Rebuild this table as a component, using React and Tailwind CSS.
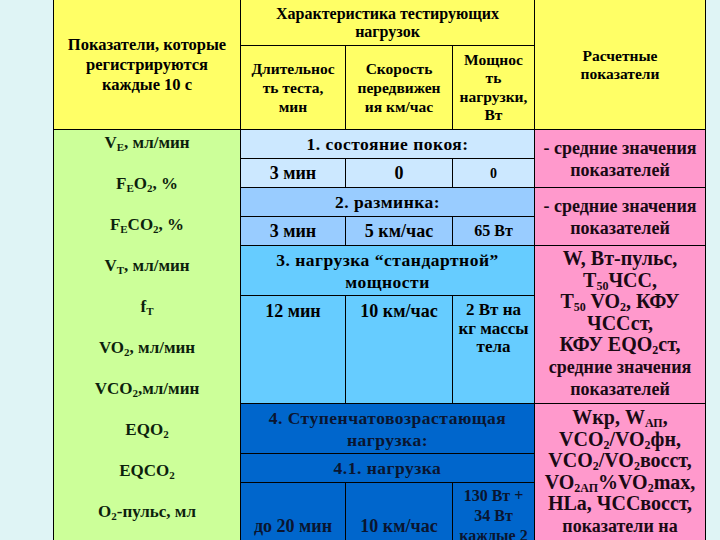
const indicators = [
  <>V<sub className="text-[11px]">E</sub>, мл/мин</>,
  <>F<sub className="text-[11px]">E</sub>O<sub className="text-[11px]">2</sub>, %</>,
  <>F<sub className="text-[11px]">E</sub>CO<sub className="text-[11px]">2</sub>, %</>,
  <>V<sub className="text-[11px]">T</sub>, мл/мин</>,
  <>f<sub className="text-[11px]">T</sub></>,
  <>VO<sub className="text-[11px]">2</sub>, мл/мин</>,
  <>VCO<sub className="text-[11px]">2</sub>,мл/мин</>,
  <>EQO<sub className="text-[11px]">2</sub></>,
  <>EQCO<sub className="text-[11px]">2</sub></>,
  <>O<sub className="text-[11px]">2</sub>-пульс, мл</>,
];

const Sub = ({ children }) => <sub className="text-[12px]">{children}</sub>;

export default function App() {
  return (
    <div className="min-h-[540px] bg-[#dff4f5] [font-family:Liberation_Serif,serif] font-bold text-black overflow-hidden">
      <div className="ml-[53px] w-[653px] bg-black px-px pb-px grid grid-cols-[186px_104px_106px_81px_170px] grid-rows-[45px_83px_28px_28px_28px_28px_49px_107px_49px_28px_auto] gap-px text-center whitespace-nowrap">
        {/* header */}
        <div className="col-start-1 row-start-1 row-span-2 bg-[#ffff66] flex items-center justify-center text-[16.5px] leading-[20px]">
          Показатели, которые<br />регистрируются<br />каждые 10 с
        </div>
        <div className="col-start-2 col-span-3 row-start-1 bg-[#ffff66] flex items-center justify-center text-[16px] leading-[18px]">
          Характеристика тестирующих<br />нагрузок
        </div>
        <div className="col-start-5 row-start-1 row-span-2 bg-[#ffff66] flex items-center justify-center text-[15.5px] leading-[18px]">
          Расчетные<br />показатели
        </div>
        <div className="col-start-2 row-start-2 bg-[#ffff66] flex items-center justify-center text-[15.5px] leading-[19px]">
          Длительнос<br />ть теста,<br />мин
        </div>
        <div className="col-start-3 row-start-2 bg-[#ffff66] flex items-center justify-center text-[15.5px] leading-[19px]">
          Скорость<br />передвижен<br />ия км/час
        </div>
        <div className="col-start-4 row-start-2 bg-[#ffff66] flex items-center justify-center text-[15.5px] leading-[18.5px]">
          Мощнос<br />ть<br />нагрузки,<br />Вт
        </div>

        {/* left indicators */}
        <div className="col-start-1 row-start-3 row-span-9 bg-[#ccff99] pt-[3px] text-[17px] leading-[20px] text-[#0d1f0d]">
          {indicators.map((item, i) => (
            <div key={i} className="h-[41px]">{item}</div>
          ))}
        </div>

        {/* 1. rest */}
        <div className="col-start-2 col-span-3 row-start-3 bg-[#cce8ff] flex items-center justify-center text-[17.5px] tracking-[0.5px]">
          1. состояние покоя:
        </div>
        <div className="col-start-2 row-start-4 bg-[#cce8ff] flex items-center justify-center text-[18px]">3 мин</div>
        <div className="col-start-3 row-start-4 bg-[#cce8ff] flex items-center justify-center text-[18px]">0</div>
        <div className="col-start-4 row-start-4 bg-[#cce8ff] flex items-center justify-center text-[14px]">0</div>
        <div className="col-start-5 row-start-3 row-span-2 bg-[#ff99cc] flex items-center justify-center text-[18px] leading-[22px] text-[#1a0a14]">
          - средние значения<br />показателей
        </div>

        {/* 2. warm-up */}
        <div className="col-start-2 col-span-3 row-start-5 bg-[#99ccff] flex items-center justify-center text-[17.5px] tracking-[0.5px]">
          2. разминка:
        </div>
        <div className="col-start-2 row-start-6 bg-[#99ccff] flex items-center justify-center text-[18px]">3 мин</div>
        <div className="col-start-3 row-start-6 bg-[#99ccff] flex items-center justify-center text-[18px]">5 км/час</div>
        <div className="col-start-4 row-start-6 bg-[#99ccff] flex items-center justify-center text-[16px]">65 Вт</div>
        <div className="col-start-5 row-start-5 row-span-2 bg-[#ff99cc] flex items-center justify-center text-[18px] leading-[22px] text-[#1a0a14]">
          - средние значения<br />показателей
        </div>

        {/* 3. standard load */}
        <div className="col-start-2 col-span-3 row-start-7 bg-[#66ccff] flex items-center justify-center text-[17.5px] leading-[22px] tracking-[0.5px]">
          3. нагрузка “стандартной”<br />мощности
        </div>
        <div className="col-start-2 row-start-8 bg-[#66ccff] pt-[5px] text-[18px] leading-[20px]">12 мин</div>
        <div className="col-start-3 row-start-8 bg-[#66ccff] pt-[5px] text-[18px] leading-[20px]">10 км/час</div>
        <div className="col-start-4 row-start-8 bg-[#66ccff] pt-[5px] text-[17px] leading-[18.5px]">
          2 Вт на<br />кг массы<br />тела
        </div>
        <div className="col-start-5 row-start-7 row-span-2 bg-[#ff99cc] flex items-center justify-center text-[20px] leading-[21.6px] text-[#1a0a14]">
          <div>
            W, Вт-пульс,<br />
            T<Sub>50</Sub>ЧСС,<br />
            T<Sub>50</Sub> VO<Sub>2</Sub>, КФУ<br />
            ЧССст,<br />
            КФУ EQO<Sub>2</Sub>ст,<br />
            <span className="text-[18px]">средние значения</span><br />
            <span className="text-[18px]">показателей</span>
          </div>
        </div>

        {/* 4. step load */}
        <div className="col-start-2 col-span-3 row-start-9 bg-[#0066cc] flex items-center justify-center text-[17.5px] leading-[22px] tracking-[0.5px] text-[#0a1530]">
          4. Ступенчатовозрастающая<br />нагрузка:
        </div>
        <div className="col-start-2 col-span-3 row-start-10 bg-[#0066cc] flex items-center justify-center text-[17.5px] tracking-[0.5px] text-[#0a1530]">
          4.1. нагрузка
        </div>
        <div className="col-start-2 row-start-11 bg-[#0066cc] flex items-center justify-center text-[18px] text-[#0a1530]">до 20 мин</div>
        <div className="col-start-3 row-start-11 bg-[#0066cc] flex items-center justify-center text-[18px] text-[#0a1530]">10 км/час</div>
        <div className="col-start-4 row-start-11 bg-[#0066cc] py-[3px] text-[16px] leading-[20px] text-[#0a1530]">
          130 Вт +<br />34 Вт<br />каждые 2<br />мин
        </div>
        <div className="col-start-5 row-start-9 row-span-3 bg-[#ff99cc] pt-[3px] text-[20px] leading-[21.6px] text-[#1a0a14]">
          Wкр, W<Sub>АП</Sub>,<br />
          VCO<Sub>2</Sub>/VO<Sub>2</Sub>фн,<br />
          VCO<Sub>2</Sub>/VO<Sub>2</Sub>восст,<br />
          VO<Sub>2АП</Sub>%VO<Sub>2</Sub>max,<br />
          HLa, ЧССвосст,<br />
          <span className="text-[18px]">показатели на</span><br />
          <span className="text-[18px]">восстановлении</span>
        </div>
      </div>
    </div>
  );
}
